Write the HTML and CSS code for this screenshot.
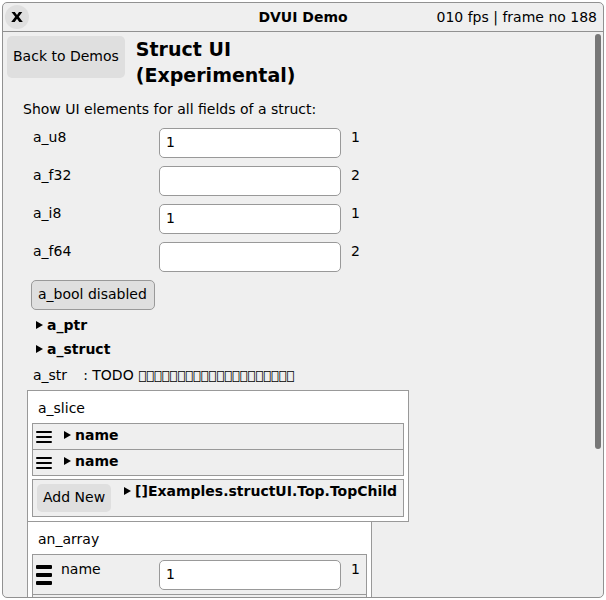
FILE: index.html
```html
<!DOCTYPE html>
<html lang="en">
<head>
<meta charset="utf-8">
<title>DVUI Demo</title>
<link rel="stylesheet" href="styles.css">
</head>
<body>
<main class="window">
  <header class="titlebar">
    <button class="close" type="button" aria-label="Close"><svg width="12" height="12" viewBox="0 0 12 12"><path d="M.5 1h3.300L6 4 8 1h3.300L7.800 5.800 11.800 11H8.300L6 7.800 3.700 11H.2l4-5.200z"/></svg></button>
    <h1 class="title">DVUI Demo</h1>
    <span class="stats">010 fps | frame no 188</span>
  </header>
  <div class="body">
    <div class="content">
      <div class="top">
        <button class="btn back" type="button">Back to Demos</button>
        <h2 class="heading">Struct UI<br>(Experimental)</h2>
      </div>
      <p class="intro">Show UI elements for all fields of a struct:</p>
      <div class="fields">
        <div class="field"><label for="u8">a_u8</label><input id="u8" type="text" value="1"><output for="u8">1</output></div>
        <div class="field"><label for="f32">a_f32</label><input id="f32" type="text"><output for="f32">2</output></div>
        <div class="field"><label for="i8">a_i8</label><input id="i8" type="text" value="1"><output for="i8">1</output></div>
        <div class="field"><label for="f64">a_f64</label><input id="f64" type="text"><output for="f64">2</output></div>
      </div>
      <button class="toggle" type="button">a_bool disabled</button>
      <button class="expander" type="button"><svg class="arrow" viewBox="0 0 7 8"><path d="M0 0l7 4-7 4z"/></svg>a_ptr</button>
      <button class="expander" type="button"><svg class="arrow" viewBox="0 0 7 8"><path d="M0 0l7 4-7 4z"/></svg>a_struct</button>
      <p class="string"><span>a_str</span><span>: TODO <span class="raw">&#xE123;&#xE123;&#xE123;&#xE123;&#xE123;&#xE123;&#xE123;&#xE123;&#xE123;&#xE123;&#xE123;&#xE123;&#xE123;&#xE123;&#xE123;&#xE123;&#xE123;&#xE123;&#xE123;&#xE123;</span></span></p>
      <section class="group slice">
        <h3 class="group-title">a_slice</h3>
        <div class="item"><svg class="grip" viewBox="0 0 16 12"><path d="M1 1h14M1 6h14M1 11h14"/></svg><button class="expander" type="button"><svg class="arrow" viewBox="0 0 7 8"><path d="M0 0l7 4-7 4z"/></svg>name</button></div>
        <div class="item"><svg class="grip" viewBox="0 0 16 12"><path d="M1 1h14M1 6h14M1 11h14"/></svg><button class="expander" type="button"><svg class="arrow" viewBox="0 0 7 8"><path d="M0 0l7 4-7 4z"/></svg>name</button></div>
        <div class="item adder"><button class="btn add" type="button">Add New</button><button class="expander" type="button"><svg class="arrow" viewBox="0 0 7 8"><path d="M0 0l7 4-7 4z"/></svg>[]Examples.structUI.Top.TopChild</button></div>
      </section>
      <section class="group array">
        <h3 class="group-title">an_array</h3>
        <div class="item entry"><svg class="grip tall" viewBox="0 0 16 20"><path d="M1 1h14v2H1zM1 9h14v2H1zM1 17h14v2H1z"/></svg><div class="field"><label for="n0">name</label><input id="n0" type="text" value="1"><output for="n0">1</output></div></div>
        <div class="item entry"></div>
      </section>
    </div>
    <div class="track"><div class="thumb"></div></div>
  </div>
</main>
</body>
</html>
```
FILE: styles.css
```css
* { box-sizing: border-box; }
body {
  margin: 0;
  padding: 2px;
  height: 100vh;
  background: #fff;
  color: #000;
  font: 14px/18px "DejaVu Sans", sans-serif;
}
button, input {
  font: inherit;
  color: inherit;
}
button {
  border: 0;
  padding: 0;
  background: none;
}
h1, h2, h3, p { margin: 0; }
svg { display: block; fill: #000; }

.window {
  display: flex;
  flex-direction: column;
  height: 100%;
  background: #efefef;
  border: 1px solid #919191;
  border-radius: 5px;
  overflow: hidden;
}
.titlebar {
  flex: none;
  display: grid;
  grid-template-columns: 1fr auto 1fr;
  align-items: center;
  height: 29px;
  padding: 0 6px 0 2px;
  border-bottom: 1px solid #919191;
}
.close {
  display: grid;
  place-items: center;
  width: 24px;
  height: 24px;
  border-radius: 50%;
  background: #dfdfdf;
}
.title { padding-left: 4px; font-size: 14px; font-weight: bold; }
.stats { text-align: right; }

.body {
  flex: 1;
  min-height: 0;
  display: flex;
}
.content {
  flex: 1;
  min-width: 0;
  overflow: hidden;
  display: flex;
  flex-direction: column;
  align-items: flex-start;
  padding: 4px;
}
.content > * { flex: none; }
.track { padding: 2px; width: 10px; }
.thumb {
  width: 6px;
  height: 74%;
  border-radius: 3px;
  background: #777;
}

.top { display: flex; gap: 11px; align-items: flex-start; }
.btn {
  padding: 0 6px 2px;
  border-radius: 5px;
  background: #dfdfdf;
}
.back { height: 42px; }
.heading { font-size: 19px; line-height: 26px; }
.intro { margin: 12px 0 0 16px; }

.fields {
  display: grid;
  gap: 8px;
  margin: 10px 0 0 26px;
}
.field { display: flex; gap: 10px; align-items: flex-start; }
.field label { width: 116px; }
.field input {
  width: 182px;
  height: 30px;
  padding: 0 6px 2px;
  border: 1px solid #999;
  border-radius: 5px;
  background: #fff;
}

.toggle {
  height: 30px;
  margin: 8px 0 4px 24px;
  padding: 0 7px 2px 6px;
  border: 1px solid #999;
  border-radius: 5px;
  background: #dfdfdf;
}
.expander {
  display: flex;
  align-items: center;
  gap: 4px;
  height: 24px;
  padding-bottom: 2px;
  font-weight: bold;
}
.content > .expander { margin-left: 29px; }
.arrow { width: 7px; height: 8px; }
.string {
  display: flex;
  gap: 16px;
  height: 18px;
  margin: 4px 0 6px 26px;
}
.raw { font-size: 13px; }

.group {
  margin-left: 20px;
  padding: 4px;
  border: 1px solid #999;
  background: #fff;
}
.group + .group { margin-top: -1px; }
.group-title {
  padding: 4px 6px 6px;
  font-size: 14px;
  font-weight: normal;
}
.item {
  display: flex;
  align-items: center;
  gap: 12px;
  height: 27px;
  padding: 0 4px 0 3px;
  border: 1px solid #999;
  background: #efefef;
}
.item > .expander { padding-bottom: 3px; }
.item + .item { margin-top: -1px; }
.item + .adder { margin-top: 3px; }
.grip {
  width: 16px;
  height: 12px;
  stroke: #000;
  stroke-width: 2;
  stroke-linecap: round;
  stroke-linejoin: round;
}
.tall { height: 20px; }
.adder {
  height: 38px;
  align-items: flex-start;
  gap: 13px;
  padding: 4px 6px 4px 4px;
}
.add { height: 28px; }
.adder .expander { height: 16px; }
.item + .entry { margin-top: -1px; }
.entry {
  height: 41px;
  gap: 9px;
  padding: 4px 6px 4px 3px;
}
.entry label { width: 88px; }
```
